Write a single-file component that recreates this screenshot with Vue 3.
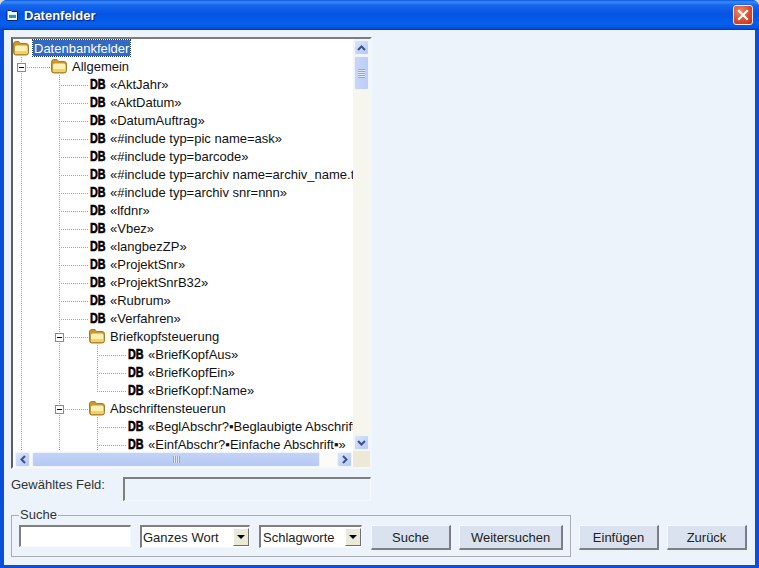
<script setup>
const rows = [
  { level: 0, type: 'folder', text: 'Datenbankfelder', selected: true },
  { level: 1, type: 'folder', text: 'Allgemein' },
  { level: 2, type: 'db', text: '«AktJahr»' },
  { level: 2, type: 'db', text: '«AktDatum»' },
  { level: 2, type: 'db', text: '«DatumAuftrag»' },
  { level: 2, type: 'db', text: '«#include typ=pic name=ask»' },
  { level: 2, type: 'db', text: '«#include typ=barcode»' },
  { level: 2, type: 'db', text: '«#include typ=archiv name=archiv_name.txt»' },
  { level: 2, type: 'db', text: '«#include typ=archiv snr=nnn»' },
  { level: 2, type: 'db', text: '«lfdnr»' },
  { level: 2, type: 'db', text: '«Vbez»' },
  { level: 2, type: 'db', text: '«langbezZP»' },
  { level: 2, type: 'db', text: '«ProjektSnr»' },
  { level: 2, type: 'db', text: '«ProjektSnrB32»' },
  { level: 2, type: 'db', text: '«Rubrum»' },
  { level: 2, type: 'db', text: '«Verfahren»' },
  { level: 2, type: 'folder', text: 'Briefkopfsteuerung' },
  { level: 3, type: 'db', text: '«BriefKopfAus»' },
  { level: 3, type: 'db', text: '«BriefKopfEin»' },
  { level: 3, type: 'db', text: '«BriefKopf:Name»' },
  { level: 2, type: 'folder', text: 'Abschriftensteuerun' },
  { level: 3, type: 'db', text: '«BeglAbschr?▪Beglaubigte Abschrift▪»' },
  { level: 3, type: 'db', text: '«EinfAbschr?▪Einfache Abschrift▪»' },
]
const indent = (r) => ({ paddingLeft: r.level * 38 + 'px' })
// local coordinates of the list: origin at page (13, 39)
const rowY = (i) => 10 + i * 18
const hLines = []
rows.forEach((r, i) => {
  if (r.level === 0) return
  const x0 = r.level === 1 ? 8 : r.level === 2 ? 46 : 84
  const x1 = r.level === 1 ? 38 : r.level === 2 ? 76 : 114
  hLines.push({ x0, x1, y: rowY(i) })
})
const expanders = [1, 16, 20].map((i) => ({ x: rows[i].level === 1 ? 4 : 42, y: rowY(i) - 4 }))
</script>

<template>
  <div class="window">
    <header class="titlebar">
      <svg class="appicon" width="14" height="14" viewBox="0 0 14 14">
        <path d="M2 3.500L3 2.500H6L7 3.500H12.500V12.500H2Z" fill="#f4f8fa" stroke="#08246a" />
        <path d="M4 6H11V10H4Z" fill="#2f9aa6" />
        <path d="M4 6H11V7H4Z" fill="#cfeff0" />
      </svg>
      <span class="title">Datenfelder</span>
      <button class="close" type="button">
        <svg width="12" height="12" viewBox="0 0 12 12">
          <path d="M2 2l8 8M10 2l-8 8" stroke="#fff" stroke-width="2.2" stroke-linecap="square" />
        </svg>
      </button>
    </header>
    <main class="client">
      <section class="tree">
        <div class="list">
          <svg class="lines" width="341" height="412" viewBox="0 0 341 412">
            <g stroke="#a3a3a3" stroke-width="1" stroke-dasharray="1 1" shape-rendering="crispEdges" fill="none">
              <path d="M8.500 18V412" />
              <path d="M46.500 36V412" />
              <path d="M84.500 306V352" />
              <path d="M84.500 378V412" />
              <path v-for="(l, i) in hLines" :key="i" :d="`M${l.x0} ${l.y + 0.5}H${l.x1}`" />
            </g>
            <g v-for="(e, i) in expanders" :key="'e' + i" shape-rendering="crispEdges">
              <rect :x="e.x + 0.5" :y="e.y + 0.5" width="8" height="8" fill="#fff" stroke="#8c8c8c" />
              <path :d="`M${e.x + 2} ${e.y + 4.5}h5`" stroke="#000" />
            </g>
          </svg>
          <div v-for="(r, i) in rows" :key="i" class="row" :style="indent(r)">
            <svg v-if="r.type === 'folder'" class="folder" width="16" height="16" viewBox="0 0 16 16">
              <path d="M.500 4Q.500 1.500 3 1.500H6L7.500 3.500H13Q15.500 3.500 15.500 6V12.500Q15.500 15 13 15H3Q.500 15 .500 12.500Z" fill="#c89a2c" stroke="#a67f25" />
              <path d="M2 7Q2 5.500 3.500 5.500H13Q14.500 5.500 14.500 7V12.500Q14.500 14 13 14H3.500Q2 14 2 12.500Z" fill="#fdf0b4" />
              <path d="M2 11H14.500V12.500Q14.500 14 13 14H3.500Q2 14 2 12.500Z" fill="#f2d06c" />
            </svg>
            <span v-else class="db"><b>DB</b></span>
            <span class="label" :class="{ selected: r.selected }">{{ r.text }}</span>
          </div>
        </div>
        <div class="vscroll">
          <div class="sbtn">
            <svg width="9" height="6" viewBox="0 0 9 6"><path d="M1 5l3.500-3.500L8 5" fill="none" stroke="#3a5288" stroke-width="2" /></svg>
          </div>
          <div class="vthumb"><span class="grip-v"></span></div>
          <div class="spacer"></div>
          <div class="sbtn">
            <svg width="9" height="6" viewBox="0 0 9 6"><path d="M1 1l3.500 3.500L8 1" fill="none" stroke="#3a5288" stroke-width="2" /></svg>
          </div>
        </div>
        <div class="hscroll">
          <div class="sbtn">
            <svg width="6" height="9" viewBox="0 0 6 9"><path d="M5 1L1.500 4.500L5 8" fill="none" stroke="#3a5288" stroke-width="2" /></svg>
          </div>
          <div class="hthumb"><span class="grip-h"></span></div>
          <div class="spacer"></div>
          <div class="sbtn">
            <svg width="6" height="9" viewBox="0 0 6 9"><path d="M1 1l3.500 3.500L1 8" fill="none" stroke="#3a5288" stroke-width="2" /></svg>
          </div>
        </div>
        <div class="corner"></div>
      </section>

      <div class="selected-field">
        <label class="field-label">Gewähltes Feld:</label>
        <div class="field-box"></div>
      </div>

      <div class="bottom">
        <fieldset class="search">
          <legend>Suche</legend>
          <div class="search-row">
            <input class="input" type="text" />
            <div class="select s1"><span>Ganzes Wort</span><i class="arrow"></i></div>
            <div class="select s2"><span>Schlagworte</span><i class="arrow"></i></div>
            <button class="btn" type="button">Suche</button>
            <button class="btn wide" type="button">Weitersuchen</button>
          </div>
        </fieldset>
        <div class="actions">
          <button class="btn" type="button">Einfügen</button>
          <button class="btn" type="button">Zurück</button>
        </div>
      </div>
    </main>
  </div>
</template>

<style>
html, body { margin: 0; background: #d9d9d9; }
</style>

<style scoped>
.window {
  width: 759px;
  height: 568px;
  display: flex;
  flex-direction: column;
  overflow: hidden;
  box-sizing: border-box;
  border-radius: 7px 7px 0 0;
  background: #0a4fdc;
  font-family: "Liberation Sans", Arial, sans-serif;
  font-size: 13px;
  color: #222;
}
.titlebar {
  height: 30px;
  flex: none;
  display: flex;
  align-items: center;
  box-sizing: border-box;
  padding: 0 6px 0 5px;
  background: linear-gradient(#0a5ae0 0, #3a8bf5 2px, #1667ee 5px, #0554e3 14px, #0560ee 24px, #0553dd 28px, #0038b0 30px);
}
.appicon { flex: none; margin-right: 5px; }
.title {
  flex: 1;
  color: #fff;
  font-weight: bold;
  font-size: 13px;
  text-shadow: 1px 1px 1px #0f1f7a;
}
.close {
  width: 20px;
  height: 20px;
  padding: 0;
  display: flex;
  align-items: center;
  justify-content: center;
  border: 1px solid #f4e6e2;
  border-radius: 3px;
  background: radial-gradient(circle at 35% 30%, #ee8a68, #d8482a 60%, #b9361c);
}
.client {
  flex: 1;
  margin: 0 4px 3px;
  min-height: 0;
  background: #ecf3fb;
  padding: 7px 0 0 7px;
  display: flex;
  flex-direction: column;
}
.tree {
  width: 361px;
  height: 432px;
  box-sizing: border-box;
  flex: none;
  display: grid;
  grid-template-columns: 340px 17px;
  grid-template-rows: 412px 16px;
  border-style: solid;
  border-width: 2px;
  border-color: #7c7c7c #f3f6fb #f3f6fb #5e5e5e;
}
.list {
  position: relative;
  overflow: hidden;
  background: #fff;
  height: 412px;
  white-space: nowrap;
}
.lines { position: absolute; left: 0; top: 0; }
.row {
  position: relative;
  height: 18px;
  display: flex;
  align-items: center;
  gap: 3px;
  color: #111;
}
.folder { flex: none; margin-right: 1px; }
.db {
  flex: none;
  width: 17px;
  height: 16px;
  overflow: visible;
  background: #fff;
  display: block;
}
.db b {
  display: inline-block;
  transform: scaleX(0.72);
  transform-origin: left center;
  margin-left: 1px;
  font-family: "Liberation Sans", sans-serif;
  font-weight: bold;
  font-size: 15px;
  line-height: 16px;
  color: #000;
  -webkit-text-stroke: 0.6px #000;
}
.label { padding: 1px 1px 0; line-height: 15px; height: 16px; box-sizing: border-box; }
.selected {
  background: #316ac5;
  color: #fff;
  outline: 1px dotted #1c3c78;
}
.vscroll {
  background: #f7f6ee;
  display: flex;
  flex-direction: column;
  align-items: center;
  padding: 1px 0;
}
.hscroll {
  background: #fbfbf7;
  display: flex;
  align-items: center;
  padding: 0 1px 0 2px;
}
.corner { background: #ece9d8; }
.spacer { flex: 1; }
.sbtn {
  width: 15px;
  height: 15px;
  flex: none;
  box-sizing: border-box;
  display: flex;
  align-items: center;
  justify-content: center;
  background: linear-gradient(135deg, #dbe6fb, #b4c8f4);
  border: 1px solid #eef3fd;
  border-radius: 2px;
}
.vthumb {
  width: 15px;
  height: 34px;
  margin-top: 1px;
  box-sizing: border-box;
  display: flex;
  align-items: center;
  justify-content: center;
  background: linear-gradient(90deg, #c8d6f8, #bccdf6);
  border: 1px solid #eef3fd;
  border-radius: 2px;
}
.grip-v {
  width: 7px;
  height: 9px;
  background: repeating-linear-gradient(#8ea6dc 0 1px, #dfe8fb 1px 2px);
}
.hthumb {
  width: 288px;
  height: 15px;
  margin-left: 2px;
  box-sizing: border-box;
  display: flex;
  align-items: center;
  justify-content: center;
  background: linear-gradient(#c3d3f7, #b6c9f4);
  border: 1px solid #eef3fd;
  border-radius: 2px;
}
.grip-h {
  width: 7px;
  height: 7px;
  background: repeating-linear-gradient(90deg, #8ea6dc 0 1px, #dfe8fb 1px 2px);
}
.selected-field {
  display: flex;
  margin-top: 8px;
  flex: none;
}
.field-label {
  width: 112px;
  color: #333;
}
.field-box {
  width: 248px;
  height: 24px;
  box-sizing: border-box;
  border-style: solid;
  border-width: 2px 1px 1px 2px;
  border-color: #7f7f7f #f5f8fc #f5f8fc #7f7f7f;
}
.bottom {
  display: flex;
  align-items: flex-end;
  margin-top: 7px;
  flex: none;
}
.search {
  width: 560px;
  height: 49px;
  margin: 0;
  box-sizing: border-box;
  padding: 3px 0 0 7px;
  border: 1px solid #a9adb3;
  min-inline-size: 0;
}
.search legend {
  padding: 0 1px;
  margin-left: 0;
  font-size: 13px;
  line-height: 14px;
  color: #333;
}
.search-row {
  display: flex;
  align-items: flex-start;
}
.input {
  width: 112px;
  height: 22px;
  box-sizing: border-box;
  padding: 0;
  background: #fff;
  border-style: solid;
  border-width: 2px 1px 1px 2px;
  border-color: #7f7f7f #f5f8fc #f5f8fc #7f7f7f;
}
.select {
  height: 23px;
  box-sizing: border-box;
  display: flex;
  align-items: center;
  justify-content: space-between;
  background: #fff;
  border-style: solid;
  border-width: 2px 1px 1px 2px;
  border-color: #7f7f7f #f5f8fc #f5f8fc #7f7f7f;
  padding-left: 1px;
  color: #222;
  font-size: 13px;
}
.s1 { width: 110px; margin-left: 9px; }
.s2 { width: 103px; margin-left: 9px; padding-left: 2px; }
.arrow {
  width: 16px;
  height: 18px;
  flex: none;
  box-sizing: border-box;
  position: relative;
  background: #ece9d8;
  border-right: 1px solid #6f6f6f;
  border-bottom: 1px solid #6f6f6f;
  border-top: 1px solid #fff;
  border-left: 1px solid #fff;
}
.arrow::after {
  content: "";
  position: absolute;
  left: 3px;
  top: 6px;
  border-left: 4px solid transparent;
  border-right: 4px solid transparent;
  border-top: 4px solid #000;
}
.btn {
  width: 80px;
  height: 25px;
  padding: 0;
  box-sizing: border-box;
  font-family: inherit;
  font-size: 13px;
  color: #222;
  background: #d9e2ee;
  border-style: solid;
  border-width: 1px 2px 2px 1px;
  border-color: #f7f9fc #7b7f85 #7b7f85 #f7f9fc;
}
.search-row .btn { margin-left: 9px; }
.search-row .btn.wide { width: 104px; margin-left: 8px; }
.actions {
  display: flex;
  gap: 8px;
  margin-left: 8px;
  margin-bottom: 7px;
}
</style>
